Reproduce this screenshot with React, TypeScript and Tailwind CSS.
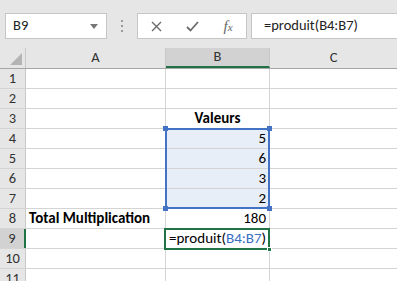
import React from "react";

const font = { fontFamily: "Carlito, 'Open Sans', 'Liberation Sans', sans-serif" };

const rows = [1, 2, 3, 4, 5, 6, 7, 8, 9, 10, 11];

function Cell({ children, className = "" }: { children?: React.ReactNode; className?: string }) {
  return (
    <div className={`h-full border-r border-[#d4d4d4] flex items-center px-[3px] text-[15px] text-black overflow-visible whitespace-nowrap ${className}`}>
      {children}
    </div>
  );
}

export default function App() {
  const content: Record<number, [React.ReactNode, React.ReactNode, string?, string?]> = {
    3: [null, <span className="font-bold w-full text-center">Valeurs</span>],
    4: [null, <span className="w-full text-right">5</span>, "sel"],
    5: [null, <span className="w-full text-right">6</span>, "sel"],
    6: [null, <span className="w-full text-right">3</span>, "sel"],
    7: [null, <span className="w-full text-right">2</span>, "sel"],
    8: [<span className="font-bold">Total Multiplication</span>, <span className="w-full text-right">180</span>],
    9: [
      null,
      <span>
        =produit(<span className="text-[#3a6fc0]">B4:B7</span>)
      </span>,
    ],
  };
  return (
    <div className="w-[397px] h-[281px] overflow-hidden bg-white relative" style={font}>
      {/* toolbar */}
      <div className="h-[48px] bg-[#e6e6e6] flex items-start pt-[13px]">
        <div className="ml-[5px] w-[102px] h-[26px] bg-white border border-[#c6c6c6] flex items-center justify-between pl-[7px] pr-[8px]">
          <span className="text-[14.5px] text-[#222]">B9</span>
          <svg width="8" height="5" viewBox="0 0 8 5"><path d="M0 0h8L4 5z" fill="#777" /></svg>
        </div>
        <div className="ml-[14px] mt-[7px] flex flex-col gap-[3px]">
          <div className="w-[2px] h-[2px] bg-[#9a9a9a]" />
          <div className="w-[2px] h-[2px] bg-[#9a9a9a]" />
          <div className="w-[2px] h-[2px] bg-[#9a9a9a]" />
        </div>
        <div className="ml-[14px] w-[110px] h-[26px] bg-white border border-[#c6c6c6] flex items-center">
          <div className="w-[36px] flex justify-center">
            <svg width="11" height="11" viewBox="0 0 11 11"><path d="M1 1L10 10M10 1L1 10" stroke="#6b6b6b" strokeWidth="1.4" /></svg>
          </div>
          <div className="w-[36px] flex justify-center">
            <svg width="13" height="11" viewBox="0 0 13 11"><path d="M1 6L4.5 9.5L12 1" stroke="#6b6b6b" strokeWidth="1.8" fill="none" /></svg>
          </div>
          <div className="w-[36px] flex justify-center">
            <span className="text-[15px] text-[#666] italic" style={{ fontFamily: "'Liberation Serif', serif" }}>
              f<span className="text-[11px]">x</span>
            </span>
          </div>
        </div>
        <div className="ml-[4px] flex-1 h-[26px] bg-white border border-[#c6c6c6] border-r-0 flex items-center pl-[12px]">
          <span className="text-[14.5px] text-[#222]">=produit(B4:B7)</span>
        </div>
      </div>
      {/* column headers */}
      <div className="h-[21px] flex bg-[#e6e6e6] border-b border-[#a6a6a6]">
        <div className="w-[26px] h-full border-r border-[#c8c8c8] relative">
          <svg className="absolute right-[3px] bottom-[3px]" width="12" height="12" viewBox="0 0 12 12"><path d="M12 0V12H0z" fill="#b4b4b4" /></svg>
        </div>
        <div className="w-[140px] h-full border-r border-[#c8c8c8] flex items-center justify-center text-[14.5px] text-[#333]">A</div>
        <div className="w-[104px] h-full border-r border-[#c8c8c8] bg-[#d2d2d2] flex items-center justify-center text-[14.5px] text-[#333] border-b-2 border-b-[#217346]">B</div>
        <div className="flex-1 h-full flex items-center justify-center text-[14.5px] text-[#333]">C</div>
      </div>
      {/* rows */}
      {rows.map((r) => {
        const c = content[r];
        const sel = c?.[2] === "sel";
        return (
          <div key={r} className="h-[20px] flex border-b border-[#d4d4d4]">
            <div
              className={`w-[26px] h-full border-r flex items-center justify-center text-[14.5px] ${
                r === 9 ? "bg-[#d2d2d2] border-r-2 border-r-[#217346] text-[#333]" : "bg-[#e6e6e6] border-[#c8c8c8] text-[#333]"
              }`}
            >
              {r}
            </div>
            <Cell className="w-[140px]">{c?.[0]}</Cell>
            <Cell className={`w-[104px] ${sel ? "bg-[#e8eef8]" : ""}`}>{c?.[1]}</Cell>
            <Cell className="flex-1 border-r-0" />
          </div>
        );
      })}
      {/* selection B4:B7 */}
      <div className="absolute left-[165px] top-[128px] w-[105px] h-[81px] border-2 border-[#4472c4] pointer-events-none" />
      <div className="absolute left-[163px] top-[126px] w-[5px] h-[5px] bg-[#4472c4]" />
      <div className="absolute left-[267px] top-[126px] w-[5px] h-[5px] bg-[#4472c4]" />
      <div className="absolute left-[163px] top-[206px] w-[5px] h-[5px] bg-[#4472c4]" />
      <div className="absolute left-[267px] top-[206px] w-[5px] h-[5px] bg-[#4472c4]" />
      {/* active B9 */}
      <div className="absolute left-[164px] top-[228px] w-[106px] h-[22px] border-2 border-[#217346] pointer-events-none" />
      <div className="absolute left-[267px] top-[247px] w-[5px] h-[5px] bg-[#217346] border border-white" />
    </div>
  );
}
